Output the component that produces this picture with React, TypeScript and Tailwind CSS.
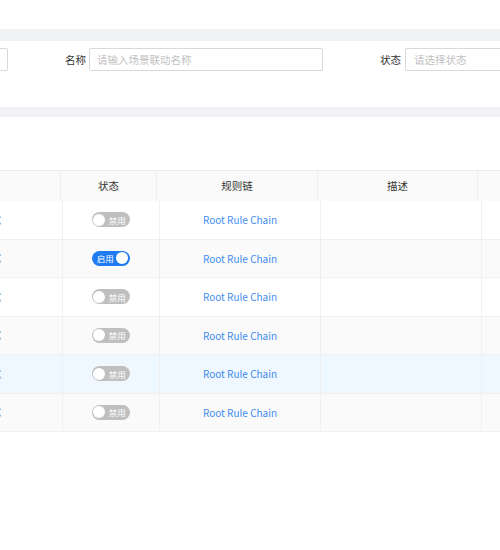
import React from "react";

type Row = {
    name: string;
    enabled: boolean;
    ruleChain: string;
};

const rows: Row[] = [
    {name: "场景联动测试", enabled: false, ruleChain: "Root Rule Chain"},
    {name: "场景联动测试", enabled: true, ruleChain: "Root Rule Chain"},
    {name: "场景联动测试", enabled: false, ruleChain: "Root Rule Chain"},
    {name: "场景联动测试", enabled: false, ruleChain: "Root Rule Chain"},
    {name: "场景联动测试", enabled: false, ruleChain: "Root Rule Chain"},
    {name: "场景联动测试", enabled: false, ruleChain: "Root Rule Chain"},
];

const StatusSwitch: React.FC<{enabled: boolean}> = ({enabled}) => {
    if (enabled) {
        return (
            <div className="flex h-[15px] w-[38px] items-center justify-between rounded-full bg-[#1f7bf2] pl-[5px] pr-[1.5px]">
                <span className="whitespace-nowrap text-[8.5px] leading-none text-white">启用</span>
                <span className="h-[12px] w-[12px] rounded-full bg-white"/>
            </div>
        );
    }
    return (
        <div className="flex h-[15px] w-[38px] items-center justify-between rounded-full bg-[#bfbfbf] pl-[1.5px] pr-[4px]">
            <span className="h-[12px] w-[12px] rounded-full bg-white"/>
            <span className="whitespace-nowrap text-[8.5px] leading-none text-white">禁用</span>
        </div>
    );
};

const App: React.FC = () => {
    return (
        <div className="h-[550px] w-[500px] overflow-hidden bg-white text-[10.5px] text-[#333]"
             style={{fontFamily: '"Noto Sans CJK SC", "Noto Sans", sans-serif'}}>
            <div className="h-[29px]"/>
            <div className="h-[12px] bg-[#f0f2f5]"/>

            {/* search form */}
            <div className="flex h-[66px] items-start pt-[7px]">
                <div className="h-[23px] w-[8px] rounded-r-[2px] border border-l-0 border-[#d9d9d9]"/>
                <span className="ml-[57px] mr-[3px] whitespace-nowrap leading-[23px] text-[#333]">名称</span>
                <div className="flex h-[23px] w-[234px] items-center whitespace-nowrap rounded-[2px] border border-[#d9d9d9] px-[7px] text-[#bfbfbf]">
                    请输入场景联动名称
                </div>
                <span className="ml-[57px] mr-[4px] whitespace-nowrap leading-[23px] text-[#333]">状态</span>
                <div className="flex h-[23px] flex-1 items-center whitespace-nowrap rounded-l-[2px] border border-r-0 border-[#d9d9d9] px-[8px] text-[#bfbfbf]">
                    请选择状态
                </div>
            </div>

            <div className="h-[10px] bg-[#f0f2f5]"/>
            <div className="h-[53px]"/>

            {/* table header */}
            <div className="flex h-[31px] border-t border-[#ececec] bg-[#fafafa] text-[#333]">
                <div className="w-[61px] border-r border-[#efefef]"/>
                <div className="flex w-[96px] items-center justify-center border-r border-[#efefef]">状态</div>
                <div className="flex w-[161px] items-center justify-center border-r border-[#efefef]">规则链</div>
                <div className="flex w-[160px] items-center justify-center border-r border-[#efefef]">描述</div>
                <div className="flex-1"/>
            </div>

            {/* table body */}
            <div>
                {rows.map((row, i) => {
                    const bg = i === 4 ? "bg-[#eff7ff]" : i % 2 === 1 ? "bg-[#fafafa]" : "bg-white";
                    return (
                        <div key={i} className={`flex h-[38.5px] border-b border-[#f0f0f0] ${bg}`}>
                            <div className="flex w-[62.5px] items-center justify-end overflow-hidden border-r border-[#f0f0f0]">
                                <span className="mr-[60.5px] whitespace-nowrap text-[#666]">{row.name}</span>
                            </div>
                            <div className="flex w-[97.5px] items-center justify-center border-r border-[#f0f0f0]">
                                <StatusSwitch enabled={row.enabled}/>
                            </div>
                            <div className="flex w-[161px] items-center justify-center whitespace-nowrap border-r border-[#f0f0f0] text-[10px] text-[#3f8cf0]">
                                {row.ruleChain}
                            </div>
                            <div className="w-[161px] border-r border-[#f0f0f0]"/>
                            <div className="flex-1"/>
                        </div>
                    );
                })}
            </div>
        </div>
    );
};

export default App;
